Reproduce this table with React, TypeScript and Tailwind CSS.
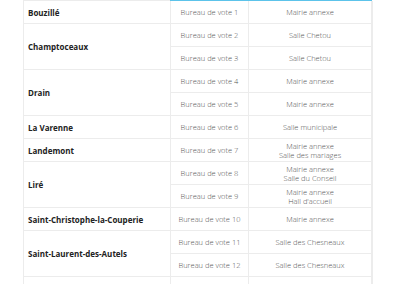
import React from "react";

type Row = { bureau: string; lieu: string[] };
type City = { name: string; rows: Row[] };

const data: City[] = [
  { name: "Bouzillé", rows: [{ bureau: "Bureau de vote 1", lieu: ["Mairie annexe"] }] },
  {
    name: "Champtoceaux",
    rows: [
      { bureau: "Bureau de vote 2", lieu: ["Salle Chetou"] },
      { bureau: "Bureau de vote 3", lieu: ["Salle Chetou"] },
    ],
  },
  {
    name: "Drain",
    rows: [
      { bureau: "Bureau de vote 4", lieu: ["Mairie annexe"] },
      { bureau: "Bureau de vote 5", lieu: ["Mairie annexe"] },
    ],
  },
  { name: "La Varenne", rows: [{ bureau: "Bureau de vote 6", lieu: ["Salle municipale"] }] },
  { name: "Landemont", rows: [{ bureau: "Bureau de vote 7", lieu: ["Mairie annexe", "Salle des mariages"] }] },
  {
    name: "Liré",
    rows: [
      { bureau: "Bureau de vote 8", lieu: ["Mairie annexe", "Salle du Conseil"] },
      { bureau: "Bureau de vote 9", lieu: ["Mairie annexe", "Hall d'accueil"] },
    ],
  },
  { name: "Saint-Christophe-la-Couperie", rows: [{ bureau: "Bureau de vote 10", lieu: ["Mairie annexe"] }] },
  {
    name: "Saint-Laurent-des-Autels",
    rows: [
      { bureau: "Bureau de vote 11", lieu: ["Salle des Chesneaux"] },
      { bureau: "Bureau de vote 12", lieu: ["Salle des Chesneaux"] },
    ],
  },
  { name: "", rows: [{ bureau: "", lieu: [""] }] },
];

export default function App() {
  const cells: React.ReactNode[] = [];
  let rowIndex = 1;
  data.forEach((city, ci) => {
    const span = city.rows.length;
    cells.push(
      <div
        key={`c${ci}`}
        className="flex items-center border-b border-r border-[#ececec] pl-[4px] pt-[1px] text-[8px] font-bold text-[#222]"
        style={{ gridRow: `${rowIndex} / span ${span}`, gridColumn: 1 }}
      >
        {city.name}
      </div>
    );
    city.rows.forEach((r, ri) => {
      const gr = rowIndex + ri;
      cells.push(
        <div
          key={`b${ci}-${ri}`}
          className="flex h-[23px] items-center justify-center border-b border-r border-[#ececec] pt-[1px] text-[7.5px] font-light text-[#555]"
          style={{ gridRow: gr, gridColumn: 2 }}
        >
          {r.bureau}
        </div>
      );
      cells.push(
        <div
          key={`l${ci}-${ri}`}
          className="flex h-[23px] flex-col items-center justify-center border-b border-r-2 border-[#ececec] pt-[1px] text-center text-[7.5px] font-light leading-[9px] text-[#555]"
          style={{ gridRow: gr, gridColumn: 3 }}
        >
          {r.lieu.map((l, i) => (
            <span key={i}>{l}</span>
          ))}
        </div>
      );
    });
    rowIndex += span;
  });

  return (
    <div
      className="h-[284px] w-[400px] overflow-hidden bg-white"
      style={{ fontFamily: "'Open Sans', 'Noto Sans', sans-serif" }}
    >
      <div className="ml-[23px] w-[349px]">
        <div className="grid grid-cols-[147px_78px_124px]">
          <div className="h-[1px] bg-[#ececec]" />
          <div className="col-span-2 h-[1px] bg-[#5cc3ea]" />
        </div>
        <div className="grid grid-cols-[147px_78px_124px] border-l border-[#ececec]">{cells}</div>
      </div>
    </div>
  );
}
